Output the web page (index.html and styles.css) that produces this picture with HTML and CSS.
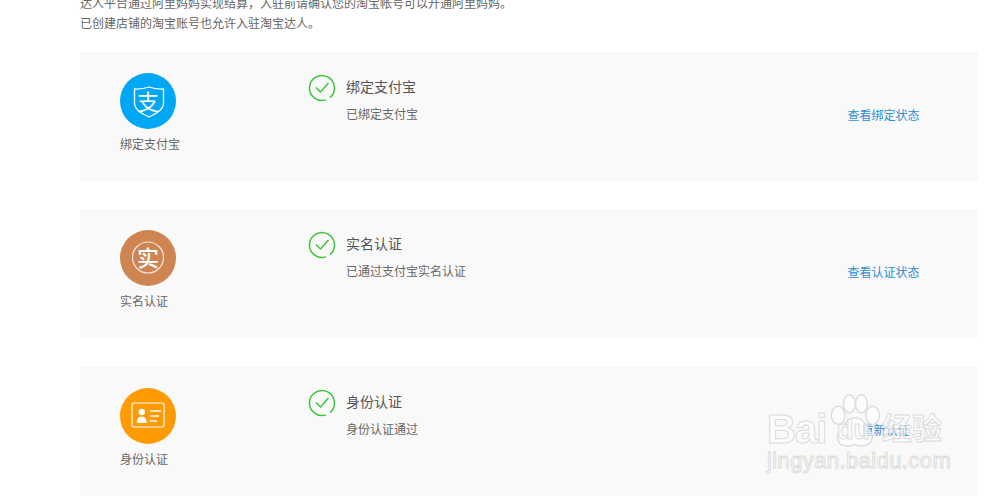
FILE: index.html
```html
<!DOCTYPE html>
<html lang="zh-CN">
<head>
    <meta charset="UTF-8">
    <meta name="viewport" content="width=device-width, initial-scale=1.0">
    <title>淘宝达人入驻</title>
    <link rel="stylesheet" href="styles.css">
</head>
<body>
    <div class="page">
        <div class="intro">
            <p>达人平台通过阿里妈妈实现结算，入驻前请确认您的淘宝帐号可以开通阿里妈妈。</p>
            <p>已创建店铺的淘宝账号也允许入驻淘宝达人。</p>
        </div>

        <div class="step">
            <div class="step-badge">
                <div class="badge-icon badge-blue">
                    <svg width="56" height="56" viewBox="0 0 56 56" fill="none" stroke="#fff">
                        <path d="M14.500 16 Q22 16.500 29 14 Q36 16.500 43.500 16 V31 Q43 38 29 44 Q15 38 14.500 31 Z" stroke-width="1.300"/>
                        <text x="28" y="36.500" class="badge-glyph">支</text>
                    </svg>
                </div>
                <div class="badge-label">绑定支付宝</div>
            </div>
            <div class="step-info">
                <svg class="check" width="28" height="28" viewBox="0 0 28 28" fill="none">
                    <path d="M22 23.600 A12.500 12.500 0 1 0 18 25.850" stroke="#3cc43c" stroke-width="1.500"/>
                    <path d="M8 13.500 L12.500 18 L20.500 9" stroke="#3cc43c" stroke-width="1.500"/>
                </svg>
                <div class="step-text">
                    <div class="step-title">绑定支付宝</div>
                    <div class="step-desc">已绑定支付宝</div>
                </div>
            </div>
            <a class="step-link" href="#">查看绑定状态</a>
        </div>

        <div class="step">
            <div class="step-badge">
                <div class="badge-icon badge-brown">
                    <svg width="56" height="56" viewBox="0 0 56 56" fill="none" stroke="#fff">
                        <circle cx="28" cy="27.500" r="15.500" stroke-width="1.200" opacity="0.8"/>
                        <text x="28" y="35.500" class="badge-glyph badge-glyph-bold">实</text>
                    </svg>
                </div>
                <div class="badge-label">实名认证</div>
            </div>
            <div class="step-info">
                <svg class="check" width="28" height="28" viewBox="0 0 28 28" fill="none">
                    <path d="M22 23.600 A12.500 12.500 0 1 0 18 25.850" stroke="#3cc43c" stroke-width="1.500"/>
                    <path d="M8 13.500 L12.500 18 L20.500 9" stroke="#3cc43c" stroke-width="1.500"/>
                </svg>
                <div class="step-text">
                    <div class="step-title">实名认证</div>
                    <div class="step-desc">已通过支付宝实名认证</div>
                </div>
            </div>
            <a class="step-link" href="#">查看认证状态</a>
        </div>

        <div class="step">
            <div class="step-badge">
                <div class="badge-icon badge-orange">
                    <svg width="56" height="56" viewBox="0 0 56 56" fill="none" stroke="#fff">
                        <rect x="12" y="15" width="32" height="24" rx="1.500" stroke-width="1.200"/>
                        <circle cx="21.700" cy="24" r="3.300" fill="#fff" stroke="none"/>
                        <path d="M16.700 35 Q16.700 28.500 21.700 28.500 Q26.700 28.500 26.700 35 Z" fill="#fff" stroke="none"/>
                        <path d="M30 23 H41 M30 28 H39 M30 33 H37" stroke-width="1.300"/>
                    </svg>
                </div>
                <div class="badge-label">身份认证</div>
            </div>
            <div class="step-info">
                <svg class="check" width="28" height="28" viewBox="0 0 28 28" fill="none">
                    <path d="M22 23.600 A12.500 12.500 0 1 0 18 25.850" stroke="#3cc43c" stroke-width="1.500"/>
                    <path d="M8 13.500 L12.500 18 L20.500 9" stroke="#3cc43c" stroke-width="1.500"/>
                </svg>
                <div class="step-text">
                    <div class="step-title">身份认证</div>
                    <div class="step-desc">身份认证通过</div>
                </div>
            </div>
            <a class="step-link step-link-short" href="#">重新认证</a>
        </div>
    </div>

    <!-- baidu jingyan watermark -->
    <div class="watermark">
        <div class="wm-top">
            <span class="wm-bai">Bai</span>
            <svg class="wm-paw" width="56" height="58" viewBox="0 0 70 70" preserveAspectRatio="none" fill="rgba(255,255,255,0.5)" stroke="#dcdcdc" stroke-width="1.800">
                <ellipse cx="14" cy="27" rx="8.500" ry="11"/>
                <ellipse cx="28" cy="13" rx="7.500" ry="11"/>
                <ellipse cx="43" cy="13" rx="7.500" ry="11"/>
                <ellipse cx="57" cy="27" rx="8.500" ry="11"/>
                <path d="M35 30 Q45 30 50 42 Q62 52 52 62 Q42 66 35 62 Q26 66 17 62 Q8 52 20 42 Q25 30 35 30 Z"/>
            </svg>
            <span class="wm-du">du</span>
            <span class="wm-cn">经验</span>
        </div>
        <div class="wm-url">jingyan.baidu.com</div>
    </div>
</body>
</html>
```
FILE: styles.css
```css
* {
    margin: 0;
    padding: 0;
    box-sizing: border-box;
}

body {
    font-family: "Liberation Sans", "Noto Sans CJK SC", sans-serif;
    background: #fff;
    color: #666;
    display: flow-root;
    height: 499px;
    overflow: hidden;
    position: relative;
}

.page {
    width: 898px;
    margin: -6px 0 0 80px;
}

.intro {
    font-size: 12px;
    line-height: 20px;
    color: #666;
    margin-bottom: 18px;
}

.step {
    height: 129px;
    margin-bottom: 28.4px;
    background: #f9f9f9;
    display: flex;
}

.step:last-child {
    margin-bottom: 0;
}

.step-badge {
    width: 136px;
    padding: 21px 0 0 40px;
    font-size: 12px;
}

.badge-icon {
    width: 56px;
    height: 56px;
    border-radius: 50%;
    margin-bottom: 8px;
}

.badge-icon svg {
    display: block;
}

.badge-blue {
    background: #00a7f5;
}

.badge-brown {
    background: #cf8552;
}

.badge-orange {
    background: #ff9a02;
}

.badge-glyph {
    font-family: "Noto Sans CJK SC", sans-serif;
    font-size: 22px;
    fill: #fff;
    stroke: none;
    text-anchor: middle;
}

.badge-glyph-bold {
    font-weight: 500;
}

.badge-label {
    font-size: 12px;
    line-height: 16px;
    color: #666;
    white-space: nowrap;
}

.step-info {
    width: 539.5px;
    margin-left: 92px;
    padding-top: 22px;
    display: flex;
    gap: 10px;
}

.check {
    flex: none;
}

.step-title {
    font-size: 14px;
    line-height: 20px;
    color: #555;
    margin: 3px 0 10px;
}

.step-desc {
    font-size: 12px;
    line-height: 16px;
    color: #666;
}

.step-link {
    margin-top: 56px;
    font-size: 12px;
    line-height: 16px;
    height: 16px;
    color: #2d8fd5;
    text-decoration: none;
    white-space: nowrap;
}

.step-link-short {
    margin-left: 14px;
}

.watermark {
    position: absolute;
    left: 767px;
    top: 389px;
    width: 180px;
    color: rgba(255, 255, 255, 0.5);
    -webkit-text-stroke: 1px #dcdcdc;
    font-family: "Liberation Sans", "Noto Sans CJK SC", sans-serif;
}

.wm-top {
    display: flex;
    align-items: flex-end;
    height: 58px;
    position: relative;
}

.wm-bai {
    font-size: 40px;
    font-weight: bold;
    line-height: 36px;
    width: 70px;
    letter-spacing: -1px;
}

.wm-paw {
    position: absolute;
    left: 60px;
    top: 4px;
}

.wm-du {
    position: relative;
    font-size: 27px;
    font-weight: bold;
    line-height: 34px;
    width: 45px;
}

.wm-cn {
    font-size: 30px;
    line-height: 36px;
    font-weight: bold;
    position: relative;
    white-space: nowrap;
}

.wm-url {
    font-size: 22px;
    line-height: 28px;
    letter-spacing: 0.4px;
    white-space: nowrap;
}
```
